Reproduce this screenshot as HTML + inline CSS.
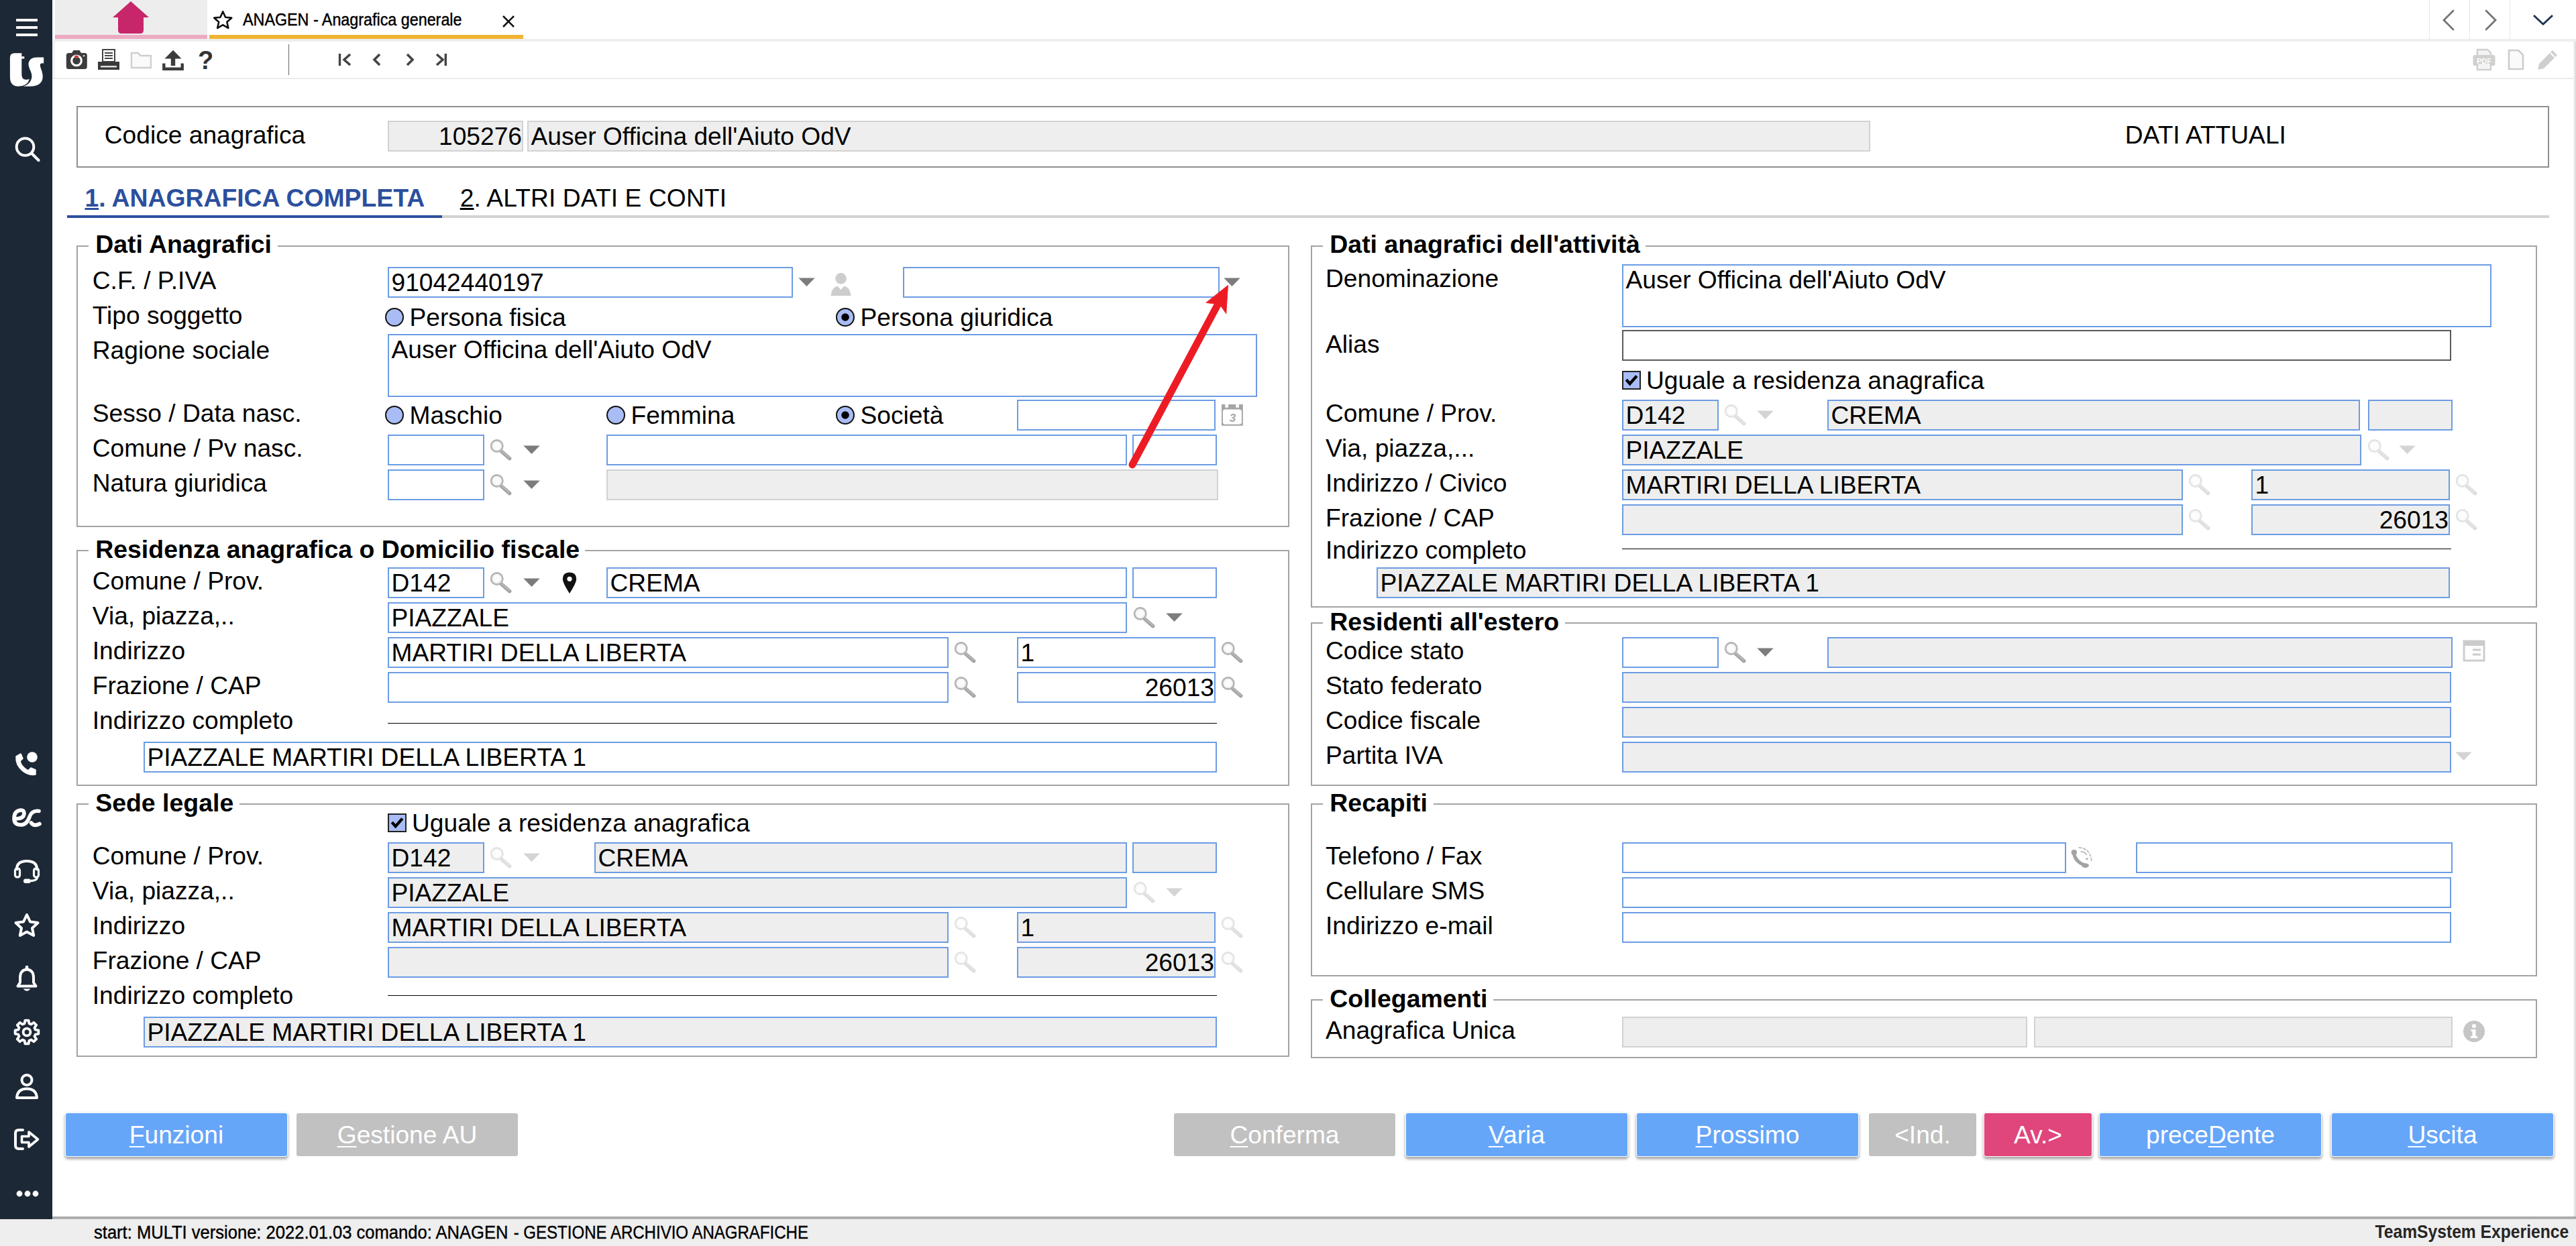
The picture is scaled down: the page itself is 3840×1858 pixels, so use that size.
<!DOCTYPE html>
<html lang="it"><head><meta charset="utf-8"><title>ANAGEN - Anagrafica generale</title>
<style>
html,body{margin:0;padding:0;background:#fff;}
body{width:3840px;height:1858px;overflow:hidden;font-family:"Liberation Sans",sans-serif;}
#root{position:relative;width:3840px;height:1858px;overflow:hidden;background:#fff;}
.a{position:absolute;display:block;}
.t{position:absolute;white-space:nowrap;font-size:37.15px;line-height:44px;color:#000;}
.bd{font-weight:bold;}
.in{position:absolute;box-sizing:border-box;}
.in.b{border:2px solid #6c9ce4;background:#fff;}
.in.bg{border:2px solid #6c9ce4;background:#eeeeee;}
.in.g{border:2px solid #d2d2d2;background:#eeeeee;}
.in.d{border:2px solid #5a5a5a;background:#fff;}
.fs{position:absolute;box-sizing:border-box;border:2px solid #a3a3a3;}
.lgbg{position:absolute;background:#fff;}
.hr{position:absolute;height:1px;background:#000;}
.btn{position:absolute;box-sizing:border-box;border-radius:3px;color:#fff;font-size:37.15px;line-height:64px;text-align:center;height:64px;top:1660px;}
.btn.bl{background:#66a6f9;box-shadow:0 0 0 1.2px #f3fbff,0 2.5px 4.5px 1px rgba(0,0,0,.42);}
.btn.gr{background:#c1c1c1;}
.btn.pk{background:#e0457b;box-shadow:0 0 0 1.2px #fff5f8,0 2.5px 4.5px 1px rgba(0,0,0,.42);}
.btn u{text-decoration-thickness:2px;text-underline-offset:4px;}
</style></head><body><div id="root">
<div class="a" style="left:0;top:0;width:78px;height:1818px;background:#1d2836"></div>
<div class="a" style="left:78px;top:0;width:3762px;height:58px;background:#fff"></div>
<div class="a" style="left:78px;top:58px;width:3762px;height:4px;background:#eeeeee"></div>
<div class="a" style="left:78px;top:58px;width:4px;height:60px;background:#f3f3f3"></div>
<div class="a" style="left:82px;top:0;width:227px;height:52px;background:#ededed"></div>
<div class="a" style="left:82px;top:52px;width:227px;height:6px;background:#eeaac3"></div>
<div class="a" style="left:312px;top:52px;width:468px;height:6px;background:#f0b432"></div>
<svg class="a" style="left:166px;top:1px" width="58" height="50" viewBox="0 0 58 50"><path d="M29 1L56 25H48V44Q48 49 43 49H15Q10 49 10 44V25H2Z" fill="#c8266b"/></svg>
<svg class="a" style="left:317px;top:15px" width="30.500" height="28.700" viewBox="0 0 34 32"><path d="M17 2.5L21.3 12L31.5 13L23.8 19.8L26 30L17 24.6L8 30L10.2 19.8L2.5 13L12.7 12Z" fill="none" stroke="#111" stroke-width="2.9" stroke-linejoin="round"/></svg>
<span class="t " style="left:361.5px;top:7.10px;font-size:25.4px;transform:scaleX(.918);transform-origin:0 50%;-webkit-text-stroke:0.45px #000">ANAGEN - Anagrafica generale</span>
<svg class="a" style="left:748px;top:22px" width="20" height="20" viewBox="0 0 20 20"><path d="M2 2L18 18M18 2L2 18" stroke="#111" stroke-width="2.6"/></svg>
<div class="a" style="left:3621px;top:0;width:1px;height:58px;background:#e6e6e6"></div>
<div class="a" style="left:3681px;top:0;width:1px;height:58px;background:#e6e6e6"></div>
<div class="a" style="left:3741px;top:0;width:1px;height:58px;background:#e6e6e6"></div>
<svg class="a" style="left:3640px;top:14px" width="20" height="32" viewBox="0 0 20 32"><path d="M17 2L3 16L17 30" fill="none" stroke="#747474" stroke-width="2.8" stroke-linecap="round"/></svg>
<svg class="a" style="left:3703px;top:14px" width="20" height="32" viewBox="0 0 20 32"><path d="M3 2L17 16L3 30" fill="none" stroke="#747474" stroke-width="2.8" stroke-linecap="round"/></svg>
<svg class="a" style="left:3775px;top:21px" width="32" height="18" viewBox="0 0 32 18"><path d="M2 2L16 15L30 2" fill="none" stroke="#1d3557" stroke-width="3"/></svg>
<div class="a" style="left:78px;top:116px;width:3762px;height:2px;background:#ebebeb"></div>
<div class="a" style="left:430px;top:66px;width:1px;height:46px;background:#666"></div>
<svg class="a" style="left:98px;top:74px" width="33" height="30" viewBox="0 0 33 30"><path d="M0.800 8.500Q0.800 5 4.500 5H9L11.500 1H20.500L23 5H28Q31.800 5 31.800 8.500V25.500Q31.800 29 28 29H4.500Q0.800 29 0.800 25.500Z" fill="#3c3c3c"/><circle cx="16" cy="16.400" r="7.300" fill="#3c3c3c" stroke="#fff" stroke-width="3.200"/><ellipse cx="16" cy="10.600" rx="3" ry="2.200" fill="#d63a3a"/><circle cx="27" cy="9.300" r="1.300" fill="#ddd"/></svg>
<svg class="a" style="left:145px;top:73px" width="34" height="32" viewBox="0 0 34 32"><rect x="8" y="1" width="18" height="18" fill="#fff" stroke="#444" stroke-width="2"/><path d="M11 6H23M11 10H23M11 14H23" stroke="#444" stroke-width="2"/><path d="M1 19H33V31H1Z" fill="#3a3a3a"/><rect x="5" y="25" width="24" height="2.5" fill="#ddd"/></svg>
<svg class="a" style="left:194px;top:76px" width="33" height="27" viewBox="0 0 33 27"><path d="M2 3H12L15 7H31V25H2Z" fill="#fafafa" stroke="#cfcfcf" stroke-width="2.4"/></svg>
<svg class="a" style="left:242px;top:74px" width="32" height="32" viewBox="0 0 32 32"><path d="M16 0.800L28.500 13.600H19.200V24H12.800V13.600H3.500Z" fill="#3c3c3c"/><path d="M2.300 20.500V28.800H29.700V20.500" fill="none" stroke="#3c3c3c" stroke-width="4.400"/></svg>
<span class="t bd" style="left:295px;top:67.83px;font-size:38px;color:#333">?</span>
<svg class="a" style="left:503px;top:79px" width="22" height="20" viewBox="0 0 22 20"><path d="M3.5 1V19" stroke="#444" stroke-width="3.4"/><path d="M19 2L10 10L19 18" fill="none" stroke="#444" stroke-width="3.6"/></svg>
<svg class="a" style="left:554px;top:79px" width="16" height="20" viewBox="0 0 16 20"><path d="M12 2L4 10L12 18" fill="none" stroke="#444" stroke-width="3.6"/></svg>
<svg class="a" style="left:603px;top:79px" width="16" height="20" viewBox="0 0 16 20"><path d="M4 2L12 10L4 18" fill="none" stroke="#444" stroke-width="3.6"/></svg>
<svg class="a" style="left:648px;top:79px" width="22" height="20" viewBox="0 0 22 20"><path d="M16.300 1V19" stroke="#444" stroke-width="3.4"/><path d="M3 2L12 10L3 18" fill="none" stroke="#444" stroke-width="3.6"/></svg>
<svg class="a" style="left:3685px;top:72px" width="36" height="34" viewBox="0 0 36 34"><path d="M8 10V2H23L28 7V10" fill="#f4f4f4" stroke="#cfcfcf" stroke-width="2.4"/><rect x="1.500" y="10" width="33" height="16" rx="3" fill="#d0d0d0"/><rect x="8" y="22" width="20" height="10" fill="#f4f4f4" stroke="#cfcfcf" stroke-width="2.4"/><text x="18" y="23" font-family="Liberation Sans, sans-serif" font-size="11" font-weight="bold" fill="#fff" text-anchor="middle">PDF</text></svg>
<svg class="a" style="left:3738px;top:73px" width="26" height="32" viewBox="0 0 26 32"><path d="M2 2H16L23 9V30H2Z" fill="#fafafa" stroke="#cdcdcd" stroke-width="2.6" stroke-linejoin="round"/></svg>
<svg class="a" style="left:3781px;top:72px" width="34" height="34" viewBox="0 0 34 34"><path d="M24 3L31 10L11 30L2 32L4 23Z" fill="#cfcfcf"/><path d="M21 7L27 13" stroke="#fff" stroke-width="2"/></svg>
<div class="a" style="left:3836px;top:62px;width:2px;height:1752px;background:#f1f1f1"></div>
<div class="a" style="left:3838px;top:62px;width:2px;height:1756px;background:#dedede"></div>
<div class="a" style="left:78px;top:1814px;width:3762px;height:4px;background:linear-gradient(#a6a6a6,#b4b4b4)"></div>
<div class="a" style="left:0;top:1818px;width:3840px;height:40px;background:#eeeeee"></div>
<span class="t " style="left:140.3px;top:1815.84px;font-size:27px;transform:scaleX(.9465);transform-origin:0 50%;-webkit-text-stroke:0.4px #000">start: MULTI versione: 2022.01.03 comando: ANAGEN</span>
<span class="t " style="left:758.5px;top:1815.84px;font-size:27px;transform:scaleX(.89);transform-origin:0 50%;-webkit-text-stroke:0.4px #000">&nbsp;- GESTIONE ARCHIVIO ANAGRAFICHE</span>
<span class="t bd" style="right:10.5px;top:1815.44px;font-size:27px;color:#262626;transform:scaleX(.913);transform-origin:100% 50%">TeamSystem Experience</span>
<svg class="a" style="left:24px;top:27px" width="32" height="28" viewBox="0 0 32 28"><path d="M1 3H31M1 14H31M1 25H31" stroke="#fff" stroke-width="3.8" stroke-linecap="round"/></svg>
<svg class="a" style="left:12px;top:76px" width="58" height="58" viewBox="12 76 58 58"><path d="M14.900 86Q14.900 79.200 21.500 79.200H32.300V84.200H36.300V87.600H32.300V111Q32.300 119.500 40 118.700L44 118Q40.500 128.800 27.500 128.800Q14.900 128.800 14.900 115Z" fill="#fff"/><path d="M65.200 85.500V94.600Q59.300 93.400 59.800 98Q60.400 101 62.400 106Q66 118 60 124Q55.500 128.800 45 128.800H34.500Q42.500 126.500 45.800 120.500Q49 114 46 107Q41.800 98 42.500 94Q44 85.500 55 85.500Z" fill="#fff"/></svg>
<svg class="a" style="left:21px;top:202px" width="40" height="40" viewBox="0 0 40 40"><circle cx="16.500" cy="17" r="12.800" fill="none" stroke="#fff" stroke-width="4"/><path d="M26 26.500L36.500 37" stroke="#fff" stroke-width="4.200" stroke-linecap="round"/></svg>
<svg class="a" style="left:20px;top:1120px" width="38" height="38" viewBox="0 0 38 38"><path d="M4 8Q3 20 13 29Q22 37 33 35V28L26 25L22 29Q12 24 10 15L14 11L11 4Z" fill="#fff" stroke="#fff" stroke-width="1.5" stroke-linejoin="round"/><circle cx="28" cy="9" r="7.800" fill="#fff"/></svg>
<svg class="a" style="left:16px;top:1203px" width="48" height="32" viewBox="0 0 48 32"><path d="M7 18Q20 18 20 9.500Q20 5 15 5Q5 6 5 17.500Q5 27 15 27Q24 27 28 15Q31.500 5 42 6.500" fill="none" stroke="#fff" stroke-width="5.600" stroke-linecap="round"/><path d="M43 25.500Q35 30 30.500 24" fill="none" stroke="#fff" stroke-width="5.600" stroke-linecap="round"/></svg>
<svg class="a" style="left:19px;top:1280px" width="42" height="40" viewBox="0 0 42 40"><path d="M6 18V16Q6 4 21 4Q36 4 36 16V18" fill="none" stroke="#fff" stroke-width="4"/><rect x="3.500" y="15" width="7" height="13" rx="3" fill="none" stroke="#fff" stroke-width="3.200"/><rect x="31.500" y="15" width="7" height="13" rx="3" fill="none" stroke="#fff" stroke-width="3.200"/><path d="M36.500 28Q36.500 33 27 33.500" fill="none" stroke="#fff" stroke-width="3.400"/><rect x="16" y="30.500" width="11" height="6.500" rx="3.200" fill="#fff"/></svg>
<svg class="a" style="left:20px;top:1360px" width="40" height="38" viewBox="0 0 40 38"><path d="M20 4L25 14.500L36.500 16L28 24L30.200 35L20 29.600L9.800 35L12 24L3.500 16L15 14.500Z" fill="none" stroke="#fff" stroke-width="4" stroke-linejoin="round"/></svg>
<svg class="a" style="left:22px;top:1440px" width="36" height="40" viewBox="0 0 36 40"><path d="M18 5.500Q8 6.500 8 18V25L4.500 30.500H31.500L28 25V18Q28 6.500 18 5.500Z" fill="none" stroke="#fff" stroke-width="4" stroke-linejoin="round"/><path d="M18 2V5" stroke="#fff" stroke-width="4.600" stroke-linecap="round"/><path d="M12.500 34.500H23.500Q18 41 12.500 34.500Z" fill="#fff"/></svg>
<svg class="a" style="left:20px;top:1519px" width="40" height="40" viewBox="0 0 40 40"><path d="M32.7 16.5L37.4 17.4L37.4 22.6L32.7 23.5L31.5 26.5L34.2 30.4L30.4 34.2L26.5 31.5L23.5 32.7L22.6 37.4L17.4 37.4L16.5 32.7L13.5 31.5L9.6 34.2L5.8 30.4L8.5 26.5L7.3 23.5L2.6 22.6L2.6 17.4L7.3 16.5L8.5 13.5L5.8 9.6L9.6 5.8L13.5 8.5L16.5 7.3L17.4 2.6L22.6 2.6L23.5 7.3L26.5 8.5L30.4 5.8L34.2 9.6L31.5 13.5Z" fill="none" stroke="#fff" stroke-width="3.800" stroke-linejoin="round"/><circle cx="20" cy="20" r="5.400" fill="none" stroke="#fff" stroke-width="3.800"/></svg>
<svg class="a" style="left:22px;top:1600px" width="36" height="40" viewBox="0 0 36 40"><circle cx="18" cy="10.500" r="7.500" fill="none" stroke="#fff" stroke-width="4"/><path d="M3 37Q4 23.500 18 23.500Q32 23.500 33 37Z" fill="none" stroke="#fff" stroke-width="4" stroke-linejoin="round"/></svg>
<svg class="a" style="left:20px;top:1682px" width="40" height="34" viewBox="0 0 40 34"><path d="M14 3H8Q3 3 3 8V26Q3 31 8 31H14" fill="none" stroke="#fff" stroke-width="4" stroke-linecap="round"/><path d="M12.500 12.500H23V6L36.500 17L23 28V21.500H12.500Z" fill="none" stroke="#fff" stroke-width="3.600" stroke-linejoin="round"/></svg>
<svg class="a" style="left:24px;top:1774px" width="34" height="12" viewBox="0 0 34 12"><circle cx="5" cy="6" r="4.400" fill="#fff"/><circle cx="17" cy="6" r="4.400" fill="#fff"/><circle cx="29" cy="6" r="4.400" fill="#fff"/></svg>
<div class="a" style="left:114px;top:158px;width:3686px;height:92px;box-sizing:border-box;border:2px solid #8f8f8f"></div>
<span class="t " style="left:155.8px;top:178.73px;">Codice anagrafica</span>
<div class="in g" style="left:578px;top:180px;width:202px;height:46px"></div>
<span class="t " style="right:3062px;top:180.83px;">105276</span>
<div class="in g" style="left:786px;top:180px;width:2002px;height:46px"></div>
<span class="t " style="left:791.5px;top:180.83px;">Auser Officina dell'Aiuto OdV</span>
<span class="t " style="left:3167.8px;top:178.83px;">DATI ATTUALI</span>
<div class="a" style="left:100px;top:321px;width:3700px;height:4px;background:#d2d2d2"></div>
<div class="a" style="left:100px;top:321px;width:559px;height:4px;background:#2c4f9e"></div>
<span class="t bd" style="left:126.5px;top:273.06px;font-size:37.35px;color:#2c4f9e"><u>1</u>. ANAGRAFICA COMPLETA</span>
<span class="t " style="left:685.7px;top:272.73px;letter-spacing:.12px"><u>2</u>. ALTRI DATI E CONTI</span>
<div class="fs" style="left:114px;top:366px;width:1808px;height:420px"></div>
<div class="lgbg" style="left:132px;top:363px;width:282px;height:8px"></div>
<span class="t bd" style="left:142.2px;top:342.32px;font-size:37.45px;">Dati Anagrafici</span>
<span class="t " style="left:137.8px;top:396.43px;">C.F. / P.IVA</span>
<div class="in b" style="left:578px;top:398px;width:604px;height:46px"></div>
<span class="t " style="left:583.5px;top:398.83px;">91042440197</span>
<svg class="a" style="left:1190.4px;top:414px" width="25" height="14" viewBox="0 0 25 14"><path d="M0.300 0.500H24.700L12.500 13Z" fill="#7c7c7c"/></svg>
<svg class="a" style="left:1237px;top:406px" width="33" height="36" viewBox="0 0 33 36"><circle cx="16.500" cy="9.300" r="8.300" fill="#cdcdcd"/><path d="M1.500 35Q2.500 22.500 11.500 20.500L16.500 26L21.500 20.500Q30.500 22.500 31.500 35Z" fill="#cdcdcd"/></svg>
<div class="in b" style="left:1346px;top:398px;width:472px;height:46px"></div>
<svg class="a" style="left:1824.4px;top:414px" width="25" height="14" viewBox="0 0 25 14"><path d="M0.300 0.500H24.700L12.500 13Z" fill="#7c7c7c"/></svg>
<span class="t " style="left:137.8px;top:448.43px;">Tipo soggetto</span>
<svg class="a" style="left:573px;top:458px" width="30" height="30" viewBox="0 0 30 30"><circle cx="15" cy="15" r="13" fill="#a9bcf5" stroke="#111" stroke-width="2"/></svg>
<span class="t " style="left:610.5px;top:450.83px;">Persona fisica</span>
<svg class="a" style="left:1245px;top:458px" width="30" height="30" viewBox="0 0 30 30"><circle cx="15" cy="15" r="13" fill="#a9bcf5" stroke="#111" stroke-width="2"/><circle cx="15" cy="15" r="5.8" fill="#000"/></svg>
<span class="t " style="left:1282.5px;top:450.83px;">Persona giuridica</span>
<span class="t " style="left:137.8px;top:500.43px;">Ragione sociale</span>
<div class="in b" style="left:578px;top:498px;width:1296px;height:94px"></div>
<span class="t " style="left:583.5px;top:498.83px;">Auser Officina dell'Aiuto OdV</span>
<span class="t " style="left:137.8px;top:594.43px;">Sesso / Data nasc.</span>
<svg class="a" style="left:573px;top:604px" width="30" height="30" viewBox="0 0 30 30"><circle cx="15" cy="15" r="13" fill="#a9bcf5" stroke="#111" stroke-width="2"/></svg>
<span class="t " style="left:610.5px;top:596.83px;">Maschio</span>
<svg class="a" style="left:903px;top:604px" width="30" height="30" viewBox="0 0 30 30"><circle cx="15" cy="15" r="13" fill="#a9bcf5" stroke="#111" stroke-width="2"/></svg>
<span class="t " style="left:940.5px;top:596.83px;">Femmina</span>
<svg class="a" style="left:1245px;top:604px" width="30" height="30" viewBox="0 0 30 30"><circle cx="15" cy="15" r="13" fill="#a9bcf5" stroke="#111" stroke-width="2"/><circle cx="15" cy="15" r="5.8" fill="#000"/></svg>
<span class="t " style="left:1282.5px;top:596.83px;">Societ&agrave;</span>
<div class="in b" style="left:1516px;top:596px;width:296px;height:46px"></div>
<svg class="a" style="left:1821px;top:603px" width="32" height="32" viewBox="0 0 32 32"><rect x="0" y="0" width="31.800" height="31.800" fill="#a4a6a5"/><rect x="5.400" y="0" width="4.500" height="4.800" fill="#fff"/><rect x="21.400" y="0" width="4.500" height="4.800" fill="#fff"/><rect x="1.900" y="7.400" width="28" height="22.400" rx="3.500" fill="#fff"/><text x="16.500" y="26" font-family="Liberation Sans, sans-serif" font-size="17" font-weight="bold" font-style="italic" fill="#a4a6a5" text-anchor="middle">3</text></svg>
<span class="t " style="left:137.8px;top:646.43px;">Comune / Pv nasc.</span>
<div class="in b" style="left:578px;top:648px;width:144px;height:46px"></div>
<svg class="a" style="left:730px;top:655px" width="36" height="34" viewBox="0 0 36 34"><line x1="17.500" y1="18" x2="29.600" y2="28.600" stroke="#a3a3a3" stroke-width="5.600" stroke-linecap="round"/><line x1="17.500" y1="17.200" x2="29.500" y2="27.600" stroke="#bcbcbc" stroke-width="1.800" stroke-linecap="round"/><circle cx="10.700" cy="10" r="8.600" fill="#fbfbfb" stroke="#b4b4b4" stroke-width="2.700"/><circle cx="10.700" cy="10" r="6.400" fill="none" stroke="#ececec" stroke-width="1.400"/></svg>
<svg class="a" style="left:780.4px;top:664px" width="25" height="14" viewBox="0 0 25 14"><path d="M0.300 0.500H24.700L12.500 13Z" fill="#7c7c7c"/></svg>
<div class="in b" style="left:904px;top:648px;width:776px;height:46px"></div>
<div class="in b" style="left:1688px;top:648px;width:126px;height:46px"></div>
<span class="t " style="left:137.8px;top:698.43px;">Natura giuridica</span>
<div class="in b" style="left:578px;top:700px;width:144px;height:46px"></div>
<svg class="a" style="left:730px;top:707px" width="36" height="34" viewBox="0 0 36 34"><line x1="17.500" y1="18" x2="29.600" y2="28.600" stroke="#a3a3a3" stroke-width="5.600" stroke-linecap="round"/><line x1="17.500" y1="17.200" x2="29.500" y2="27.600" stroke="#bcbcbc" stroke-width="1.800" stroke-linecap="round"/><circle cx="10.700" cy="10" r="8.600" fill="#fbfbfb" stroke="#b4b4b4" stroke-width="2.700"/><circle cx="10.700" cy="10" r="6.400" fill="none" stroke="#ececec" stroke-width="1.400"/></svg>
<svg class="a" style="left:780.4px;top:716px" width="25" height="14" viewBox="0 0 25 14"><path d="M0.300 0.500H24.700L12.500 13Z" fill="#7c7c7c"/></svg>
<div class="in g" style="left:904px;top:700px;width:912px;height:46px"></div>
<div class="fs" style="left:114px;top:820px;width:1808px;height:352px"></div>
<div class="lgbg" style="left:132px;top:817px;width:739.5px;height:8px"></div>
<span class="t bd" style="left:142.2px;top:796.72px;font-size:37.45px;">Residenza anagrafica o Domicilio fiscale</span>
<span class="t " style="left:137.8px;top:844.43px;">Comune / Prov.</span>
<div class="in b" style="left:578px;top:846px;width:144px;height:46px"></div>
<span class="t " style="left:583.5px;top:846.83px;">D142</span>
<svg class="a" style="left:730px;top:853px" width="36" height="34" viewBox="0 0 36 34"><line x1="17.500" y1="18" x2="29.600" y2="28.600" stroke="#a3a3a3" stroke-width="5.600" stroke-linecap="round"/><line x1="17.500" y1="17.200" x2="29.500" y2="27.600" stroke="#bcbcbc" stroke-width="1.800" stroke-linecap="round"/><circle cx="10.700" cy="10" r="8.600" fill="#fbfbfb" stroke="#b4b4b4" stroke-width="2.700"/><circle cx="10.700" cy="10" r="6.400" fill="none" stroke="#ececec" stroke-width="1.400"/></svg>
<svg class="a" style="left:780.4px;top:862px" width="25" height="14" viewBox="0 0 25 14"><path d="M0.300 0.500H24.700L12.500 13Z" fill="#7c7c7c"/></svg>
<svg class="a" style="left:838px;top:853px" width="22" height="33" viewBox="0 0 22 33"><path d="M11 0.500Q0.800 0.500 0.800 10.500Q0.800 16 11 32Q21.200 16 21.200 10.500Q21.200 0.500 11 0.500Z" fill="#111"/><circle cx="11" cy="10.300" r="3.600" fill="#fff"/></svg>
<div class="in b" style="left:904px;top:846px;width:776px;height:46px"></div>
<span class="t " style="left:909.5px;top:846.83px;">CREMA</span>
<div class="in b" style="left:1688px;top:846px;width:126px;height:46px"></div>
<span class="t " style="left:137.8px;top:896.43px;">Via, piazza,..</span>
<div class="in b" style="left:578px;top:898px;width:1102px;height:46px"></div>
<span class="t " style="left:583.5px;top:898.83px;">PIAZZALE</span>
<svg class="a" style="left:1689px;top:905px" width="36" height="34" viewBox="0 0 36 34"><line x1="17.500" y1="18" x2="29.600" y2="28.600" stroke="#a3a3a3" stroke-width="5.600" stroke-linecap="round"/><line x1="17.500" y1="17.200" x2="29.500" y2="27.600" stroke="#bcbcbc" stroke-width="1.800" stroke-linecap="round"/><circle cx="10.700" cy="10" r="8.600" fill="#fbfbfb" stroke="#b4b4b4" stroke-width="2.700"/><circle cx="10.700" cy="10" r="6.400" fill="none" stroke="#ececec" stroke-width="1.400"/></svg>
<svg class="a" style="left:1738.4px;top:914px" width="25" height="14" viewBox="0 0 25 14"><path d="M0.300 0.500H24.700L12.500 13Z" fill="#7c7c7c"/></svg>
<span class="t " style="left:137.8px;top:948.43px;">Indirizzo</span>
<div class="in b" style="left:578px;top:950px;width:836px;height:46px"></div>
<span class="t " style="left:583.5px;top:950.83px;">MARTIRI DELLA LIBERTA</span>
<svg class="a" style="left:1422px;top:957px" width="36" height="34" viewBox="0 0 36 34"><line x1="17.500" y1="18" x2="29.600" y2="28.600" stroke="#a3a3a3" stroke-width="5.600" stroke-linecap="round"/><line x1="17.500" y1="17.200" x2="29.500" y2="27.600" stroke="#bcbcbc" stroke-width="1.800" stroke-linecap="round"/><circle cx="10.700" cy="10" r="8.600" fill="#fbfbfb" stroke="#b4b4b4" stroke-width="2.700"/><circle cx="10.700" cy="10" r="6.400" fill="none" stroke="#ececec" stroke-width="1.400"/></svg>
<div class="in b" style="left:1516px;top:950px;width:296px;height:46px"></div>
<span class="t " style="left:1521.5px;top:950.83px;">1</span>
<svg class="a" style="left:1820px;top:957px" width="36" height="34" viewBox="0 0 36 34"><line x1="17.500" y1="18" x2="29.600" y2="28.600" stroke="#a3a3a3" stroke-width="5.600" stroke-linecap="round"/><line x1="17.500" y1="17.200" x2="29.500" y2="27.600" stroke="#bcbcbc" stroke-width="1.800" stroke-linecap="round"/><circle cx="10.700" cy="10" r="8.600" fill="#fbfbfb" stroke="#b4b4b4" stroke-width="2.700"/><circle cx="10.700" cy="10" r="6.400" fill="none" stroke="#ececec" stroke-width="1.400"/></svg>
<span class="t " style="left:137.8px;top:1000.43px;">Frazione / CAP</span>
<div class="in b" style="left:578px;top:1002px;width:836px;height:46px"></div>
<svg class="a" style="left:1422px;top:1009px" width="36" height="34" viewBox="0 0 36 34"><line x1="17.500" y1="18" x2="29.600" y2="28.600" stroke="#a3a3a3" stroke-width="5.600" stroke-linecap="round"/><line x1="17.500" y1="17.200" x2="29.500" y2="27.600" stroke="#bcbcbc" stroke-width="1.800" stroke-linecap="round"/><circle cx="10.700" cy="10" r="8.600" fill="#fbfbfb" stroke="#b4b4b4" stroke-width="2.700"/><circle cx="10.700" cy="10" r="6.400" fill="none" stroke="#ececec" stroke-width="1.400"/></svg>
<div class="in b" style="left:1516px;top:1002px;width:296px;height:46px"></div>
<span class="t " style="right:2030px;top:1002.83px;">26013</span>
<svg class="a" style="left:1820px;top:1009px" width="36" height="34" viewBox="0 0 36 34"><line x1="17.500" y1="18" x2="29.600" y2="28.600" stroke="#a3a3a3" stroke-width="5.600" stroke-linecap="round"/><line x1="17.500" y1="17.200" x2="29.500" y2="27.600" stroke="#bcbcbc" stroke-width="1.800" stroke-linecap="round"/><circle cx="10.700" cy="10" r="8.600" fill="#fbfbfb" stroke="#b4b4b4" stroke-width="2.700"/><circle cx="10.700" cy="10" r="6.400" fill="none" stroke="#ececec" stroke-width="1.400"/></svg>
<span class="t " style="left:137.8px;top:1052.43px;">Indirizzo completo</span>
<div class="hr" style="left:578px;top:1078px;width:1236px"></div>
<div class="in b" style="left:214px;top:1106px;width:1600px;height:46px"></div>
<span class="t " style="left:219.5px;top:1106.83px;">PIAZZALE MARTIRI DELLA LIBERTA 1</span>
<div class="fs" style="left:114px;top:1198px;width:1808px;height:378px"></div>
<div class="lgbg" style="left:132px;top:1195px;width:225px;height:8px"></div>
<span class="t bd" style="left:142.2px;top:1174.82px;font-size:37.45px;">Sede legale</span>
<svg class="a" style="left:578px;top:1213px" width="28" height="28" viewBox="0 0 28 28"><rect x="1" y="1" width="26" height="26" fill="#a9bcf5" stroke="#222" stroke-width="2"/><path d="M6.3 13.2L11.6 19.2L21.8 7.6" fill="none" stroke="#000" stroke-width="4.3"/></svg>
<span class="t " style="left:614px;top:1204.83px;">Uguale a residenza anagrafica</span>
<span class="t " style="left:137.8px;top:1254.43px;">Comune / Prov.</span>
<div class="in bg" style="left:578px;top:1256px;width:144px;height:46px"></div>
<span class="t " style="left:583.5px;top:1256.83px;">D142</span>
<svg class="a" style="left:730px;top:1263px" width="36" height="34" viewBox="0 0 36 34" opacity=".36"><line x1="17.500" y1="18" x2="29.600" y2="28.600" stroke="#a3a3a3" stroke-width="5.600" stroke-linecap="round"/><line x1="17.500" y1="17.200" x2="29.500" y2="27.600" stroke="#bcbcbc" stroke-width="1.800" stroke-linecap="round"/><circle cx="10.700" cy="10" r="8.600" fill="#fbfbfb" stroke="#b4b4b4" stroke-width="2.700"/><circle cx="10.700" cy="10" r="6.400" fill="none" stroke="#ececec" stroke-width="1.400"/></svg>
<svg class="a" style="left:780.4px;top:1272px" width="25" height="14" viewBox="0 0 25 14"><path d="M0.300 0.500H24.700L12.500 13Z" fill="#d4d4d4"/></svg>
<div class="in bg" style="left:886px;top:1256px;width:794px;height:46px"></div>
<span class="t " style="left:891.5px;top:1256.83px;">CREMA</span>
<div class="in bg" style="left:1688px;top:1256px;width:126px;height:46px"></div>
<span class="t " style="left:137.8px;top:1306.43px;">Via, piazza,..</span>
<div class="in bg" style="left:578px;top:1308px;width:1102px;height:46px"></div>
<span class="t " style="left:583.5px;top:1308.83px;">PIAZZALE</span>
<svg class="a" style="left:1689px;top:1315px" width="36" height="34" viewBox="0 0 36 34" opacity=".36"><line x1="17.500" y1="18" x2="29.600" y2="28.600" stroke="#a3a3a3" stroke-width="5.600" stroke-linecap="round"/><line x1="17.500" y1="17.200" x2="29.500" y2="27.600" stroke="#bcbcbc" stroke-width="1.800" stroke-linecap="round"/><circle cx="10.700" cy="10" r="8.600" fill="#fbfbfb" stroke="#b4b4b4" stroke-width="2.700"/><circle cx="10.700" cy="10" r="6.400" fill="none" stroke="#ececec" stroke-width="1.400"/></svg>
<svg class="a" style="left:1738.4px;top:1324px" width="25" height="14" viewBox="0 0 25 14"><path d="M0.300 0.500H24.700L12.500 13Z" fill="#d4d4d4"/></svg>
<span class="t " style="left:137.8px;top:1358.43px;">Indirizzo</span>
<div class="in bg" style="left:578px;top:1360px;width:836px;height:46px"></div>
<span class="t " style="left:583.5px;top:1360.83px;">MARTIRI DELLA LIBERTA</span>
<svg class="a" style="left:1422px;top:1367px" width="36" height="34" viewBox="0 0 36 34" opacity=".36"><line x1="17.500" y1="18" x2="29.600" y2="28.600" stroke="#a3a3a3" stroke-width="5.600" stroke-linecap="round"/><line x1="17.500" y1="17.200" x2="29.500" y2="27.600" stroke="#bcbcbc" stroke-width="1.800" stroke-linecap="round"/><circle cx="10.700" cy="10" r="8.600" fill="#fbfbfb" stroke="#b4b4b4" stroke-width="2.700"/><circle cx="10.700" cy="10" r="6.400" fill="none" stroke="#ececec" stroke-width="1.400"/></svg>
<div class="in bg" style="left:1516px;top:1360px;width:296px;height:46px"></div>
<span class="t " style="left:1521.5px;top:1360.83px;">1</span>
<svg class="a" style="left:1820px;top:1367px" width="36" height="34" viewBox="0 0 36 34" opacity=".36"><line x1="17.500" y1="18" x2="29.600" y2="28.600" stroke="#a3a3a3" stroke-width="5.600" stroke-linecap="round"/><line x1="17.500" y1="17.200" x2="29.500" y2="27.600" stroke="#bcbcbc" stroke-width="1.800" stroke-linecap="round"/><circle cx="10.700" cy="10" r="8.600" fill="#fbfbfb" stroke="#b4b4b4" stroke-width="2.700"/><circle cx="10.700" cy="10" r="6.400" fill="none" stroke="#ececec" stroke-width="1.400"/></svg>
<span class="t " style="left:137.8px;top:1410.43px;">Frazione / CAP</span>
<div class="in bg" style="left:578px;top:1412px;width:836px;height:46px"></div>
<svg class="a" style="left:1422px;top:1419px" width="36" height="34" viewBox="0 0 36 34" opacity=".36"><line x1="17.500" y1="18" x2="29.600" y2="28.600" stroke="#a3a3a3" stroke-width="5.600" stroke-linecap="round"/><line x1="17.500" y1="17.200" x2="29.500" y2="27.600" stroke="#bcbcbc" stroke-width="1.800" stroke-linecap="round"/><circle cx="10.700" cy="10" r="8.600" fill="#fbfbfb" stroke="#b4b4b4" stroke-width="2.700"/><circle cx="10.700" cy="10" r="6.400" fill="none" stroke="#ececec" stroke-width="1.400"/></svg>
<div class="in bg" style="left:1516px;top:1412px;width:296px;height:46px"></div>
<span class="t " style="right:2030px;top:1412.83px;">26013</span>
<svg class="a" style="left:1820px;top:1419px" width="36" height="34" viewBox="0 0 36 34" opacity=".36"><line x1="17.500" y1="18" x2="29.600" y2="28.600" stroke="#a3a3a3" stroke-width="5.600" stroke-linecap="round"/><line x1="17.500" y1="17.200" x2="29.500" y2="27.600" stroke="#bcbcbc" stroke-width="1.800" stroke-linecap="round"/><circle cx="10.700" cy="10" r="8.600" fill="#fbfbfb" stroke="#b4b4b4" stroke-width="2.700"/><circle cx="10.700" cy="10" r="6.400" fill="none" stroke="#ececec" stroke-width="1.400"/></svg>
<span class="t " style="left:137.8px;top:1462.43px;">Indirizzo completo</span>
<div class="hr" style="left:578px;top:1484px;width:1236px"></div>
<div class="in bg" style="left:214px;top:1516px;width:1600px;height:46px"></div>
<span class="t " style="left:219.5px;top:1516.83px;">PIAZZALE MARTIRI DELLA LIBERTA 1</span>
<div class="fs" style="left:1954px;top:366px;width:1828px;height:540px"></div>
<div class="lgbg" style="left:1972px;top:363px;width:481px;height:8px"></div>
<span class="t bd" style="left:1982.3px;top:342.32px;font-size:37.45px;">Dati anagrafici dell'attivit&agrave;</span>
<span class="t " style="left:1976px;top:393.13px;">Denominazione</span>
<div class="in b" style="left:2418px;top:394px;width:1296px;height:94px"></div>
<span class="t " style="left:2423.5px;top:394.83px;">Auser Officina dell'Aiuto OdV</span>
<span class="t " style="left:1976px;top:490.93px;">Alias</span>
<div class="in d" style="left:2418px;top:492px;width:1236px;height:46px"></div>
<svg class="a" style="left:2418px;top:553px" width="28" height="28" viewBox="0 0 28 28"><rect x="1" y="1" width="26" height="26" fill="#a9bcf5" stroke="#222" stroke-width="2"/><path d="M6.3 13.2L11.6 19.2L21.8 7.6" fill="none" stroke="#000" stroke-width="4.3"/></svg>
<span class="t " style="left:2454px;top:544.83px;">Uguale a residenza anagrafica</span>
<span class="t " style="left:1976px;top:594.43px;">Comune / Prov.</span>
<div class="in bg" style="left:2418px;top:596px;width:144px;height:46px"></div>
<span class="t " style="left:2423.5px;top:596.83px;">D142</span>
<svg class="a" style="left:2570px;top:603px" width="36" height="34" viewBox="0 0 36 34" opacity=".36"><line x1="17.500" y1="18" x2="29.600" y2="28.600" stroke="#a3a3a3" stroke-width="5.600" stroke-linecap="round"/><line x1="17.500" y1="17.200" x2="29.500" y2="27.600" stroke="#bcbcbc" stroke-width="1.800" stroke-linecap="round"/><circle cx="10.700" cy="10" r="8.600" fill="#fbfbfb" stroke="#b4b4b4" stroke-width="2.700"/><circle cx="10.700" cy="10" r="6.400" fill="none" stroke="#ececec" stroke-width="1.400"/></svg>
<svg class="a" style="left:2619.4px;top:612px" width="25" height="14" viewBox="0 0 25 14"><path d="M0.300 0.500H24.700L12.500 13Z" fill="#d4d4d4"/></svg>
<div class="in bg" style="left:2724px;top:596px;width:794px;height:46px"></div>
<span class="t " style="left:2729.5px;top:596.83px;">CREMA</span>
<div class="in bg" style="left:3530px;top:596px;width:126px;height:46px"></div>
<span class="t " style="left:1976px;top:646.43px;">Via, piazza,...</span>
<div class="in bg" style="left:2418px;top:648px;width:1102px;height:46px"></div>
<span class="t " style="left:2423.5px;top:648.83px;">PIAZZALE</span>
<svg class="a" style="left:3529px;top:655px" width="36" height="34" viewBox="0 0 36 34" opacity=".36"><line x1="17.500" y1="18" x2="29.600" y2="28.600" stroke="#a3a3a3" stroke-width="5.600" stroke-linecap="round"/><line x1="17.500" y1="17.200" x2="29.500" y2="27.600" stroke="#bcbcbc" stroke-width="1.800" stroke-linecap="round"/><circle cx="10.700" cy="10" r="8.600" fill="#fbfbfb" stroke="#b4b4b4" stroke-width="2.700"/><circle cx="10.700" cy="10" r="6.400" fill="none" stroke="#ececec" stroke-width="1.400"/></svg>
<svg class="a" style="left:3576.4px;top:664px" width="25" height="14" viewBox="0 0 25 14"><path d="M0.300 0.500H24.700L12.500 13Z" fill="#d4d4d4"/></svg>
<span class="t " style="left:1976px;top:698.43px;">Indirizzo / Civico</span>
<div class="in bg" style="left:2418px;top:700px;width:836px;height:46px"></div>
<span class="t " style="left:2423.5px;top:700.83px;">MARTIRI DELLA LIBERTA</span>
<svg class="a" style="left:3262px;top:707px" width="36" height="34" viewBox="0 0 36 34" opacity=".36"><line x1="17.500" y1="18" x2="29.600" y2="28.600" stroke="#a3a3a3" stroke-width="5.600" stroke-linecap="round"/><line x1="17.500" y1="17.200" x2="29.500" y2="27.600" stroke="#bcbcbc" stroke-width="1.800" stroke-linecap="round"/><circle cx="10.700" cy="10" r="8.600" fill="#fbfbfb" stroke="#b4b4b4" stroke-width="2.700"/><circle cx="10.700" cy="10" r="6.400" fill="none" stroke="#ececec" stroke-width="1.400"/></svg>
<div class="in bg" style="left:3356px;top:700px;width:296px;height:46px"></div>
<span class="t " style="left:3361.5px;top:700.83px;">1</span>
<svg class="a" style="left:3660px;top:707px" width="36" height="34" viewBox="0 0 36 34" opacity=".36"><line x1="17.500" y1="18" x2="29.600" y2="28.600" stroke="#a3a3a3" stroke-width="5.600" stroke-linecap="round"/><line x1="17.500" y1="17.200" x2="29.500" y2="27.600" stroke="#bcbcbc" stroke-width="1.800" stroke-linecap="round"/><circle cx="10.700" cy="10" r="8.600" fill="#fbfbfb" stroke="#b4b4b4" stroke-width="2.700"/><circle cx="10.700" cy="10" r="6.400" fill="none" stroke="#ececec" stroke-width="1.400"/></svg>
<span class="t " style="left:1976px;top:750.43px;">Frazione / CAP</span>
<div class="in bg" style="left:2418px;top:752px;width:836px;height:46px"></div>
<svg class="a" style="left:3262px;top:759px" width="36" height="34" viewBox="0 0 36 34" opacity=".36"><line x1="17.500" y1="18" x2="29.600" y2="28.600" stroke="#a3a3a3" stroke-width="5.600" stroke-linecap="round"/><line x1="17.500" y1="17.200" x2="29.500" y2="27.600" stroke="#bcbcbc" stroke-width="1.800" stroke-linecap="round"/><circle cx="10.700" cy="10" r="8.600" fill="#fbfbfb" stroke="#b4b4b4" stroke-width="2.700"/><circle cx="10.700" cy="10" r="6.400" fill="none" stroke="#ececec" stroke-width="1.400"/></svg>
<div class="in bg" style="left:3356px;top:752px;width:296px;height:46px"></div>
<span class="t " style="right:190px;top:752.83px;">26013</span>
<svg class="a" style="left:3660px;top:759px" width="36" height="34" viewBox="0 0 36 34" opacity=".36"><line x1="17.500" y1="18" x2="29.600" y2="28.600" stroke="#a3a3a3" stroke-width="5.600" stroke-linecap="round"/><line x1="17.500" y1="17.200" x2="29.500" y2="27.600" stroke="#bcbcbc" stroke-width="1.800" stroke-linecap="round"/><circle cx="10.700" cy="10" r="8.600" fill="#fbfbfb" stroke="#b4b4b4" stroke-width="2.700"/><circle cx="10.700" cy="10" r="6.400" fill="none" stroke="#ececec" stroke-width="1.400"/></svg>
<span class="t " style="left:1976px;top:798.43px;">Indirizzo completo</span>
<div class="hr" style="left:2418px;top:818px;width:1236px"></div>
<div class="in bg" style="left:2052px;top:846px;width:1600px;height:46px"></div>
<span class="t " style="left:2057.5px;top:846.83px;">PIAZZALE MARTIRI DELLA LIBERTA 1</span>
<div class="fs" style="left:1954px;top:928px;width:1828px;height:244px"></div>
<div class="lgbg" style="left:1972px;top:925px;width:361px;height:8px"></div>
<span class="t bd" style="left:1982.3px;top:904.72px;font-size:37.45px;">Residenti all'estero</span>
<span class="t " style="left:1976px;top:948.43px;">Codice stato</span>
<div class="in b" style="left:2418px;top:950px;width:144px;height:46px"></div>
<svg class="a" style="left:2570px;top:957px" width="36" height="34" viewBox="0 0 36 34"><line x1="17.500" y1="18" x2="29.600" y2="28.600" stroke="#a3a3a3" stroke-width="5.600" stroke-linecap="round"/><line x1="17.500" y1="17.200" x2="29.500" y2="27.600" stroke="#bcbcbc" stroke-width="1.800" stroke-linecap="round"/><circle cx="10.700" cy="10" r="8.600" fill="#fbfbfb" stroke="#b4b4b4" stroke-width="2.700"/><circle cx="10.700" cy="10" r="6.400" fill="none" stroke="#ececec" stroke-width="1.400"/></svg>
<svg class="a" style="left:2619.4px;top:966px" width="25" height="14" viewBox="0 0 25 14"><path d="M0.300 0.500H24.700L12.500 13Z" fill="#7c7c7c"/></svg>
<div class="in bg" style="left:2724px;top:950px;width:932px;height:46px"></div>
<svg class="a" style="left:3671px;top:954px" width="34" height="33" viewBox="0 0 34 33"><rect x="2" y="2" width="30" height="29" fill="#fdfdfd" stroke="#cbcbcb" stroke-width="2.8"/><rect x="2" y="2" width="30" height="7" fill="#cbcbcb"/><path d="M15 15H27M15 22H27" stroke="#cbcbcb" stroke-width="3"/></svg>
<span class="t " style="left:1976px;top:1000.43px;">Stato federato</span>
<div class="in bg" style="left:2418px;top:1002px;width:1236px;height:46px"></div>
<span class="t " style="left:1976px;top:1052.43px;">Codice fiscale</span>
<div class="in bg" style="left:2418px;top:1054px;width:1236px;height:46px"></div>
<span class="t " style="left:1976px;top:1104.43px;">Partita IVA</span>
<div class="in bg" style="left:2418px;top:1106px;width:1236px;height:46px"></div>
<svg class="a" style="left:3660.4px;top:1121px" width="25" height="14" viewBox="0 0 25 14"><path d="M0.300 0.500H24.700L12.500 13Z" fill="#d4d4d4"/></svg>
<div class="fs" style="left:1954px;top:1198px;width:1828px;height:258px"></div>
<div class="lgbg" style="left:1972px;top:1195px;width:165px;height:8px"></div>
<span class="t bd" style="left:1982.3px;top:1174.72px;font-size:37.45px;">Recapiti</span>
<span class="t " style="left:1976px;top:1254.43px;">Telefono / Fax</span>
<div class="in b" style="left:2418px;top:1256px;width:662px;height:46px"></div>
<div class="in b" style="left:3184px;top:1256px;width:472px;height:46px"></div>
<svg class="a" style="left:3086px;top:1261px" width="34" height="36" viewBox="0 0 34 36"><path d="M5.500 10.500Q7 24 22.500 29.500" fill="none" stroke="#a3a3a3" stroke-width="5.200"/><ellipse cx="5.800" cy="10" rx="4.200" ry="4" fill="#a3a3a3"/><ellipse cx="22.500" cy="29.600" rx="5.400" ry="3.400" fill="#a3a3a3"/><path d="M12.500 2.800Q30 3.500 32 23.500" fill="none" stroke="#b9b9b9" stroke-width="1.700" stroke-dasharray="5 1.500"/><path d="M15.500 8.800Q22 9 24.500 14" fill="none" stroke="#b9b9b9" stroke-width="1.700"/><circle cx="25" cy="19.800" r="1.700" fill="#b0b0b0"/></svg>
<span class="t " style="left:1976px;top:1306.43px;">Cellulare SMS</span>
<div class="in b" style="left:2418px;top:1308px;width:1236px;height:46px"></div>
<span class="t " style="left:1976px;top:1358.43px;">Indirizzo e-mail</span>
<div class="in b" style="left:2418px;top:1360px;width:1236px;height:46px"></div>
<div class="fs" style="left:1954px;top:1490px;width:1828px;height:88px"></div>
<div class="lgbg" style="left:1972px;top:1487px;width:254px;height:8px"></div>
<span class="t bd" style="left:1982.3px;top:1466.72px;font-size:37.45px;">Collegamenti</span>
<span class="t " style="left:1976px;top:1514.43px;">Anagrafica Unica</span>
<div class="in g" style="left:2418px;top:1516px;width:604px;height:46px"></div>
<div class="in g" style="left:3032px;top:1516px;width:624px;height:46px"></div>
<svg class="a" style="left:3671px;top:1521px" width="34" height="34" viewBox="0 0 34 34"><circle cx="17" cy="17" r="16" fill="#c6c6c6"/><circle cx="17" cy="9" r="3" fill="#fff"/><path d="M12.500 14H19.500V24H22V27H12V24H14.500V17H12.500Z" fill="#fff"/></svg>
<svg class="a" style="left:1660px;top:400px" width="220" height="320" viewBox="1660 400 220 320"><path d="M1687.900 693L1815.600 453.500" stroke="#ed1c24" stroke-width="10.800" stroke-linecap="round"/><path d="M1830.600 425.300L1827.800 467.800L1819.800 456.200L1810.200 453L1797.700 451.400Z" fill="#ed1c24" stroke="#ed1c24" stroke-width="0.800" stroke-linejoin="round"/></svg>
<div class="btn bl" style="left:98px;width:330px"><u>F</u>unzioni</div>
<div class="btn gr" style="left:442px;width:330px"><u>G</u>estione AU</div>
<div class="btn gr" style="left:1750px;width:330px"><u>C</u>onferma</div>
<div class="btn bl" style="left:2096px;width:330px"><u>V</u>aria</div>
<div class="btn bl" style="left:2440px;width:330px"><u>P</u>rossimo</div>
<div class="btn gr" style="left:2786px;width:160px">&lt;Ind.</div>
<div class="btn pk" style="left:2958px;width:160px">Av.&gt;</div>
<div class="btn bl" style="left:3130px;width:330px">prece<u>D</u>ente</div>
<div class="btn bl" style="left:3476px;width:330px"><u>U</u>scita</div>
</div></body></html>
